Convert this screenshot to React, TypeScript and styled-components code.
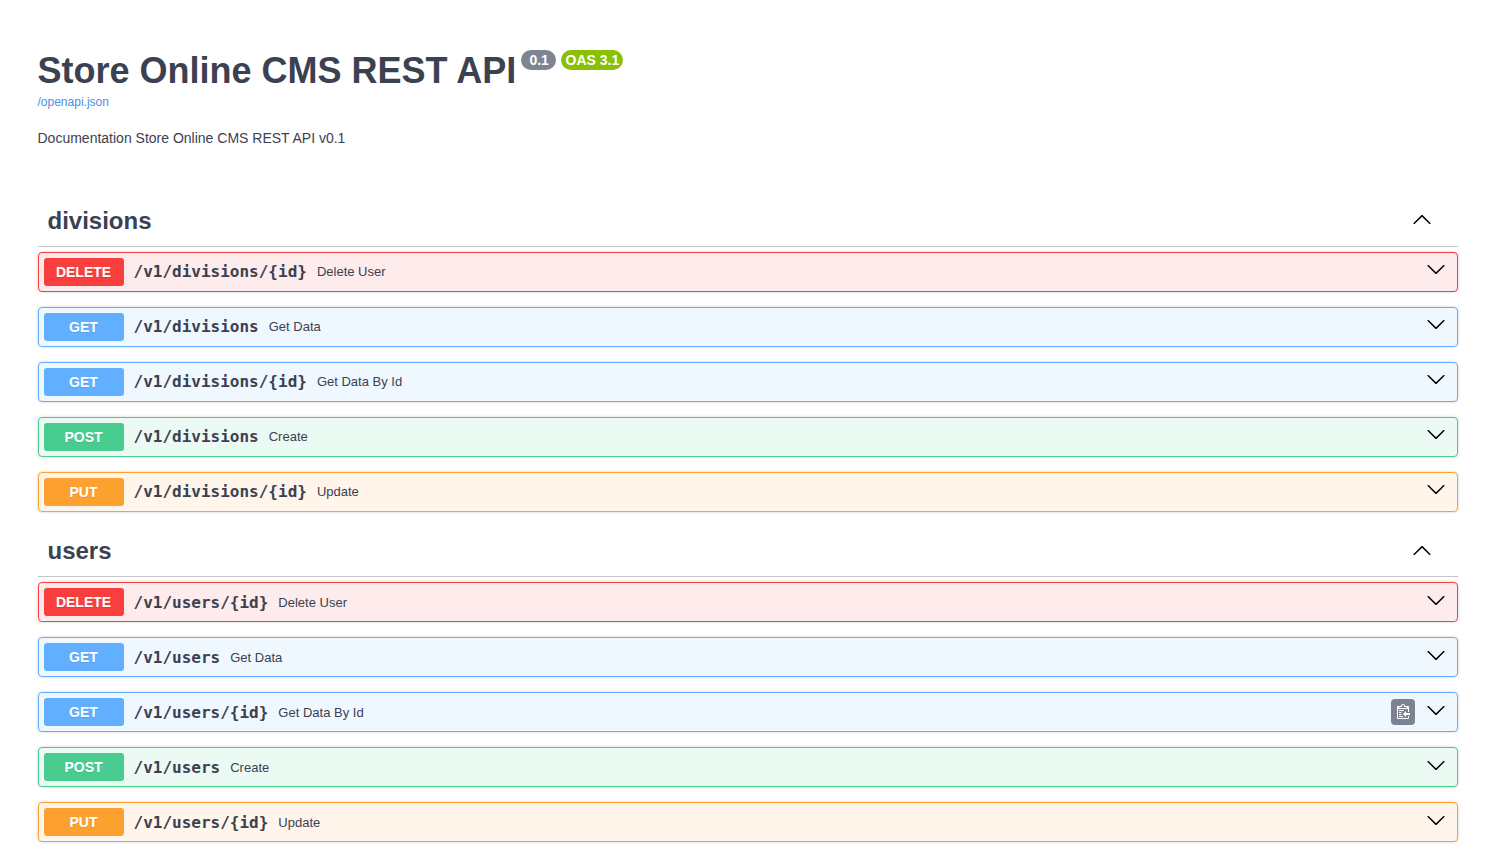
import React from 'react';
import styled, { createGlobalStyle } from 'styled-components';

const GlobalStyle = createGlobalStyle`
  *, *::before, *::after { box-sizing: border-box; }
  html, body { margin: 0; background: #fff; }
  body { overflow: hidden; font-family: "Liberation Sans", Arial, sans-serif; color: #3b4151; }
`;

const palette = {
  DELETE: { solid: '#f93e3e', tint: 'rgba(249, 62, 62, .1)' },
  GET: { solid: '#61affe', tint: 'rgba(97, 175, 254, .1)' },
  POST: { solid: '#49cc90', tint: 'rgba(73, 204, 144, .1)' },
  PUT: { solid: '#fca130', tint: 'rgba(252, 161, 48, .1)' },
};
type Method = keyof typeof palette;

const Page = styled.main`
  width: 1420px;
  margin-left: 37.5px;
  padding-top: 50px;
`;

const Info = styled.header`
  height: 146.4px;
`;

const TitleRow = styled.div`
  display: flex;
  align-items: flex-start;
  gap: 5px;
  height: 44px;
`;

const Title = styled.h1`
  margin: 0;
  font-size: 36px;
  line-height: 41px;
  font-weight: 700;
  white-space: nowrap;
`;

const Badge = styled.span<{ $color: string; $wide?: boolean }>`
  height: 20px;
  padding: ${p => (p.$wide ? '0 3.6px 0 4.4px' : '0 7.35px 0 8.15px')};
  border-radius: 57px;
  background: ${p => p.$color};
  color: #fff;
  font-size: 14px;
  line-height: 20px;
  font-weight: 700;
  white-space: nowrap;
`;

const SpecLink = styled.a`
  display: block;
  color: #4990e2;
  font-size: 12px;
  line-height: 16px;
  text-decoration: none;
`;

const Description = styled.p`
  margin: 20px 0 0;
  font-size: 14px;
  line-height: 16px;
`;

const Arrow = styled.svg`
  display: block;
  width: 20px;
  height: 20px;
  margin-top: -5px;
`;

const TagHeader = styled.div`
  display: flex;
  align-items: center;
  justify-content: space-between;
  height: 50.4px;
  margin-bottom: 5px;
  padding: 0 26px .4px 10px;
  border-bottom: 1px solid rgba(59, 65, 81, .3);

  ${Arrow} {
    margin-top: -3.4px;
  }
`;

const TagName = styled.h2`
  margin: 0;
  font-size: 24px;
  line-height: 28px;
  font-weight: 700;
`;

const Operation = styled.div<{ $method: Method }>`
  display: flex;
  align-items: center;
  height: 40px;
  margin-bottom: 15px;
  padding: 5px 11px 5px 5px;
  border: 1px solid ${p => palette[p.$method].solid};
  border-radius: 4px;
  background: ${p => palette[p.$method].tint};
  box-shadow: 0 0 3px rgba(0, 0, 0, .19);
`;

const MethodLabel = styled.span<{ $method: Method }>`
  width: 80px;
  height: 28px;
  border-radius: 3px;
  background: ${p => palette[p.$method].solid};
  color: #fff;
  font-size: 14px;
  font-weight: 700;
  line-height: 28px;
  text-align: center;
  text-shadow: 0 1px 0 rgba(0, 0, 0, .1);
`;

const Path = styled.span`
  padding: 0 10px;
  font-family: "DejaVu Sans Mono", monospace;
  font-size: 16px;
  line-height: 19px;
  font-weight: 600;
`;

const Summary = styled.span`
  flex: 1;
  font-size: 13px;
  line-height: 15px;
`;

const CopyButton = styled.button`
  display: flex;
  align-items: center;
  justify-content: center;
  width: 24px;
  height: 26px;
  margin-right: 11px;
  padding: 0;
  border: 0;
  border-radius: 4px;
  background: #7d8293;
`;

const Section = styled.section``;

const ArrowDown = () => (
  <Arrow viewBox="0 0 20 20">
    <path d="M17.418 6.109c.272-.268.709-.268.979 0s.271.701 0 .969l-7.908 7.83c-.27.268-.707.268-.979 0l-7.908-7.83c-.27-.268-.27-.701 0-.969.271-.268.709-.268.979 0L10 13.25l7.418-7.141z" />
  </Arrow>
);

const ArrowUp = () => (
  <Arrow viewBox="0 0 20 20">
    <path d="M17.418 14.908c.272.268.709.268.979 0s.271-.701 0-.969l-7.908-7.83c-.27-.268-.707-.268-.979 0l-7.908 7.83c-.27.268-.27.701 0 .969.271.268.709.268.979 0L10 7.767l7.418 7.141z" />
  </Arrow>
);

const CopyIcon = () => (
  <svg width="15" height="16" viewBox="0 0 15 16">
    <path
      fill="#fff"
      transform="translate(2 -1)"
      d="M2 13h4v1H2v-1zm5-6H2v1h5V7zm2 3V8l-3 3 3 3v-2h5v-2H9zM4.5 9H2v1h2.5V9zM2 12h2.5v-1H2v1zm9 1h1v2c-.02.28-.11.52-.3.7-.19.18-.42.28-.7.3H1c-.55 0-1-.45-1-1V4c0-.55.45-1 1-1h3c0-1.11.89-2 2-2 1.11 0 2 .89 2 2h3c.55 0 1 .45 1 1v5h-1V6H1v9h10v-2zM2 5h8c0-.55-.45-1-1-1H8c-.55 0-1-.45-1-1s-.45-1-1-1-1 .45-1 1-.45 1-1 1H3c-.55 0-1 .45-1 1z"
    />
  </svg>
);

type Op = { method: Method; suffix: string; summary: string };
const operations: Op[] = [
  { method: 'DELETE', suffix: '/{id}', summary: 'Delete User' },
  { method: 'GET', suffix: '', summary: 'Get Data' },
  { method: 'GET', suffix: '/{id}', summary: 'Get Data By Id' },
  { method: 'POST', suffix: '', summary: 'Create' },
  { method: 'PUT', suffix: '/{id}', summary: 'Update' },
];

const TagSection = ({ tag, copyIndex }: { tag: string; copyIndex?: number }) => (
  <Section>
    <TagHeader>
      <TagName>{tag}</TagName>
      <ArrowUp />
    </TagHeader>
    {operations.map((op, i) => (
      <Operation key={i} $method={op.method}>
        <MethodLabel $method={op.method}>{op.method}</MethodLabel>
        <Path>{`/v1/${tag}${op.suffix}`}</Path>
        <Summary>{op.summary}</Summary>
        {i === copyIndex && (
          <CopyButton aria-label="Copy to clipboard">
            <CopyIcon />
          </CopyButton>
        )}
        <ArrowDown />
      </Operation>
    ))}
  </Section>
);

export default function App() {
  return (
    <>
      <GlobalStyle />
      <Page>
        <Info>
          <TitleRow>
            <Title>Store Online CMS REST API</Title>
            <Badge $color="#7d8492">0.1</Badge>
            <Badge $color="#89bf04" $wide>OAS 3.1</Badge>
          </TitleRow>
          <SpecLink>/openapi.json</SpecLink>
          <Description>Documentation Store Online CMS REST API v0.1</Description>
        </Info>
        <TagSection tag="divisions" />
        <TagSection tag="users" copyIndex={2} />
      </Page>
    </>
  );
}
